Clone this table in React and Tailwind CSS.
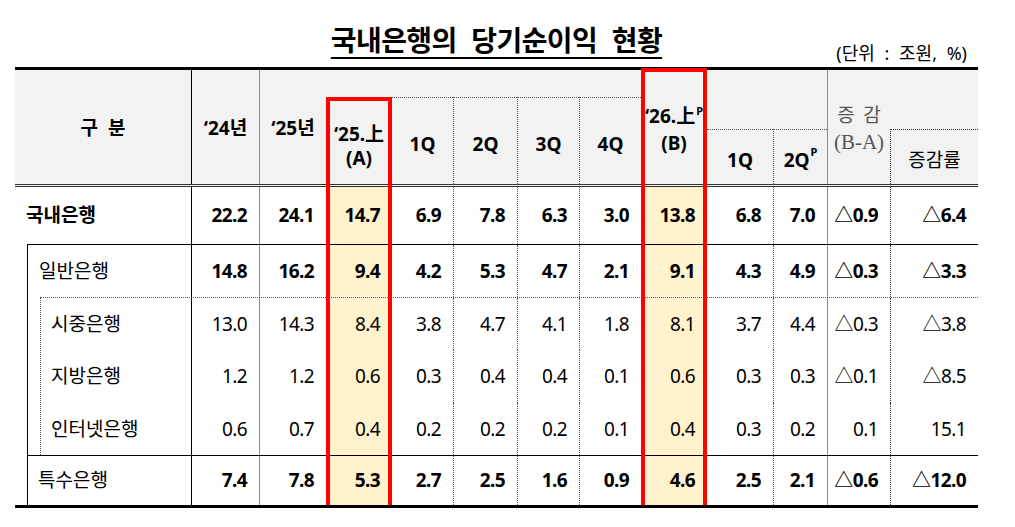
import React from "react";

const FONT = "font-['Noto_Sans','Noto_Sans_CJK_KR',sans-serif]";
const HCOLS = "grid-cols-[176px_68px_67px_66px_61px_64px_62px_62px_66px_66px_54px_63px_88px]";
const BCOLS = "grid-cols-[1fr_68px_67px_66px_61px_64px_62px_62px_66px_66px_54px_63px_88px]";

const BL = [
  "",
  "border-l border-black",
  "border-l border-[#8c8c8c]",
  "bg-[#fff2cc]",
  "",
  "border-l border-dotted border-[#555]",
  "border-l border-dotted border-[#555]",
  "border-l border-dotted border-[#555]",
  "bg-[#fff2cc]",
  "",
  "border-l border-dotted border-[#555]",
  "border-l border-[#8c8c8c]",
  "border-l border-dotted border-[#333]",
];

function Row({ label, values, h, labelBold, numBold, pl }) {
  return (
    <div className={`grid ${BCOLS} ${h}`}>
      <div className={`flex items-center ${pl} text-[19px] ${labelBold ? "font-bold" : ""}`}>{label}</div>
      {values.map((v, i) => (
        <div
          key={i}
          className={`flex items-center justify-end pr-[12px] text-[19px] tracking-[-0.6px] ${numBold ? "font-bold" : ""} ${BL[i + 1]}`}
        >
          {v}
        </div>
      ))}
    </div>
  );
}

function Sup() {
  return <span className="relative -top-[8px] ml-[1px] text-[11px] font-bold">P</span>;
}

export default function App() {
  return (
    <div className={`w-[1015px] h-[527px] bg-white text-black ${FONT}`}>
      <div className="ml-[15px] w-[963px]">
        {/* Title */}
        <div className="grid grid-cols-[1fr_auto_1fr] h-[67px] items-end">
          <div />
          <div className="self-end mb-[11px] text-[28px] font-bold leading-[32px] tracking-[-0.6px] [word-spacing:8px] underline underline-offset-[6px] decoration-[1.5px] whitespace-pre">
            국내은행의 당기순이익 현황
          </div>
          <div className="self-end mb-[3px] text-right pr-[11px] text-[18px] leading-[22px] whitespace-pre [word-spacing:5px]">
            (단위 : 조원, %)
          </div>
        </div>

        {/* Table */}
        <div className="relative border-t-[3px] border-b-[3px] border-black">
          {/* Header */}
          <div className={`grid ${HCOLS} grid-rows-[27px_32px_55px] bg-[#f2f2f2] border-b-[3px] border-double border-[#333] text-[19px] font-bold`}>
            <div className="col-start-1 row-start-1 row-span-3 flex items-center justify-center pt-[2px] whitespace-pre">구  분</div>
            <div className="col-start-2 row-start-1 row-span-3 flex items-center justify-center pt-[2px] border-l border-black">‘24년</div>
            <div className="col-start-3 row-start-1 row-span-3 flex items-center justify-center pt-[2px] border-l border-[#8c8c8c]">‘25년</div>
            <div className="col-start-4 col-span-5 row-start-1" />
            <div className="col-start-4 row-start-2 row-span-2 flex flex-col items-center justify-center pt-[10px] leading-[24px]">
              <span>‘25.上</span>
              <span>(A)</span>
            </div>
            <div className="col-start-5 row-start-2 row-span-2 flex items-center justify-center pt-[7px] border-t border-dotted border-[#555]">1Q</div>
            <div className="col-start-6 row-start-2 row-span-2 flex items-center justify-center pt-[7px] border-t border-l border-dotted border-[#555]">2Q</div>
            <div className="col-start-7 row-start-2 row-span-2 flex items-center justify-center pt-[7px] border-t border-l border-dotted border-[#555]">3Q</div>
            <div className="col-start-8 row-start-2 row-span-2 flex items-center justify-center pt-[7px] border-t border-l border-dotted border-[#555]">4Q</div>
            <div className="col-start-9 row-start-1 row-span-3 flex flex-col items-center justify-center pt-[5px] leading-[25px]">
              <span>‘26.上<Sup /></span>
              <span>(B)</span>
            </div>
            <div className="col-start-10 col-span-2 row-start-1 row-span-2" />
            <div className="col-start-10 row-start-3 flex items-center justify-center pt-[7px] border-t border-dotted border-[#555]">1Q</div>
            <div className="col-start-11 row-start-3 flex items-center justify-center pt-[7px] border-t border-l border-dotted border-[#555]">2Q<Sup /></div>
            <div className="col-start-12 row-start-1 row-span-3 flex flex-col items-center justify-center pt-[0px] border-l border-[#8c8c8c] font-normal text-[#555]">
              <span className="text-[19px] leading-[29px] whitespace-pre font-['Noto_Sans_CJK_KR',sans-serif] font-normal">증  감</span>
              <span className="text-[21px] leading-[28px] font-['Liberation_Serif',serif]">(B-A)</span>
            </div>
            <div className="col-start-13 row-start-3 flex items-center justify-center pt-[7px] border-t border-l border-dotted border-[#333] font-normal">증감률</div>
          </div>

          {/* Body */}
          <div>
            <Row
              label="국내은행"
              h="h-[57px]"
              labelBold
              numBold
              pl="pl-[11px]"
              values={["22.2", "24.1", "14.7", "6.9", "7.8", "6.3", "3.0", "13.8", "6.8", "7.0", "△0.9", "△6.4"]}
            />
            <div className="ml-[12px] border-l border-t border-black">
              <Row
                label="일반은행"
                h="h-[52px]"
                numBold
                pl="pl-[11px]"
                values={["14.8", "16.2", "9.4", "4.2", "5.3", "4.7", "2.1", "9.1", "4.3", "4.9", "△0.3", "△3.3"]}
              />
              <div className="ml-[12px] border-l border-t border-dotted border-[#555]">
                <Row
                  label="시중은행"
                  h="h-[52px]"
                  pl="pl-[10px]"
                  values={["13.0", "14.3", "8.4", "3.8", "4.7", "4.1", "1.8", "8.1", "3.7", "4.4", "△0.3", "△3.8"]}
                />
                <Row
                  label="지방은행"
                  h="h-[53px]"
                  pl="pl-[10px]"
                  values={["1.2", "1.2", "0.6", "0.3", "0.4", "0.4", "0.1", "0.6", "0.3", "0.3", "△0.1", "△8.5"]}
                />
                <Row
                  label="인터넷은행"
                  h="h-[52px]"
                  pl="pl-[10px]"
                  values={["0.6", "0.7", "0.4", "0.2", "0.2", "0.2", "0.1", "0.4", "0.3", "0.2", "0.1", "15.1"]}
                />
              </div>
              <div className="border-t border-black">
                <Row
                  label="특수은행"
                  h="h-[49px]"
                  numBold
                  pl="pl-[10px]"
                  values={["7.4", "7.8", "5.3", "2.7", "2.5", "1.6", "0.9", "4.6", "2.5", "2.1", "△0.6", "△12.0"]}
                />
              </div>
            </div>
          </div>

          {/* Red highlight boxes */}
          <div className="absolute top-[27px] bottom-0 left-[311px] w-[66px] border-x-4 border-t-4 border-[#ff0000] z-10 pointer-events-none" />
          <div className="absolute -top-[2px] bottom-0 left-[626px] w-[66px] border-x-4 border-t-4 border-[#ff0000] z-10 pointer-events-none" />
        </div>
      </div>
    </div>
  );
}
